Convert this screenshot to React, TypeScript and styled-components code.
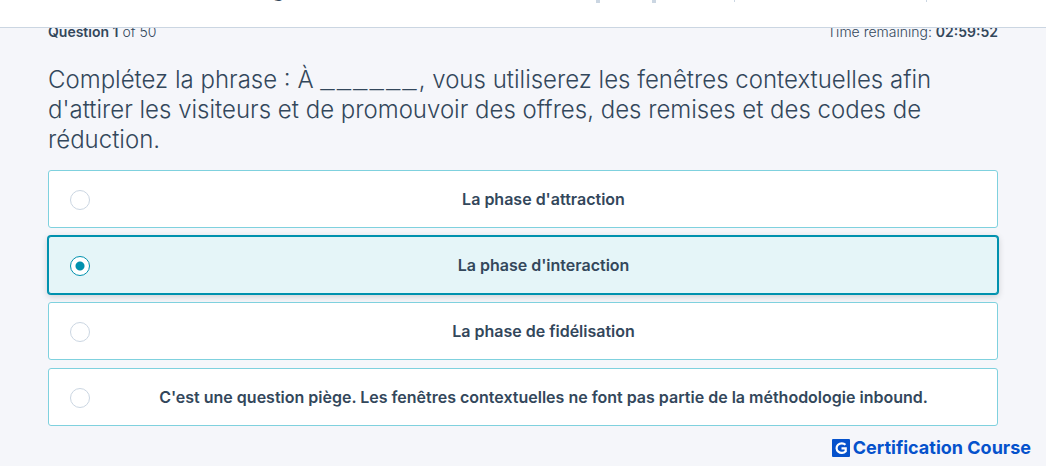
import { useState } from "react";
import styled, { createGlobalStyle } from "styled-components";

const Global = createGlobalStyle`
  * { box-sizing: border-box; }
  body {
    margin: 0;
    background: #f5f6fa;
    color: #33475b;
    font-family: Inter, "Open Sans", sans-serif;
  }
`;

const Header = styled.header`
  position: sticky;
  top: 0;
  z-index: 1;
  display: flex;
  height: 28px;
  padding-left: 26%;
  background: #fff;
  border-bottom: 1px solid #cbd6e2;
`;

const TitleEnd = styled.span`
  display: flex;
  align-items: flex-end;
  width: 12px;
  height: 2px;
  overflow: hidden;
  font-size: 20px;
  line-height: 24px;
  font-weight: 600;
`;

const Stems = styled.div`
  display: flex;
  flex: 1;
  padding-left: 312px;
`;

const Stem = styled.i<{ $w: number; $h: number; $gap: number }>`
  width: ${(p) => p.$w}px;
  height: ${(p) => p.$h}px;
  margin-right: ${(p) => p.$gap}px;
  background: #cbd6e2;
`;

const Main = styled.main`
  margin-top: -6px;
  padding: 0 48px;
`;

const Meta = styled.div`
  display: flex;
  justify-content: space-between;
  font-size: 14px;
  line-height: 20px;
  font-weight: 300;

  b { font-weight: 600; }
`;

const Question = styled.h1`
  margin: 23px 0 15px;
  font-size: 24px;
  line-height: 30px;
  font-weight: 300;
`;

const Blank = styled.span`
  font-family: "Liberation Mono", monospace;
  line-height: 24px;

  span { padding-right: 2px; }
`;

const Options = styled.fieldset`
  display: grid;
  gap: 8px;
  margin: 0;
  padding: 0;
  border: 0;
`;

const Option = styled.label<{ $on: boolean }>`
  display: flex;
  align-items: center;
  min-height: 58px;
  padding-left: 21px;
  border: 1px solid ${(p) => (p.$on ? "#0091ae" : "#7fd1de")};
  border-radius: 3px;
  background: ${(p) => (p.$on ? "#e5f5f8" : "#fff")};
  box-shadow: ${(p) => (p.$on ? "0 0 0 1px #0091ae, 0 2px 6px 1px rgba(0, 0, 0, 0.15)" : "none")};
  cursor: pointer;
`;

const Radio = styled.input`
  appearance: none;
  flex: none;
  width: 20px;
  height: 20px;
  margin: 2px 0 0;
  border: 1px solid #cbd6e2;
  border-radius: 50%;
  background: #fff;

  &:checked {
    border-color: #0091ae;
    background: radial-gradient(circle, #0091ae 4px, #fff 5px);
  }
`;

const Answer = styled.span`
  flex: 1;
  text-align: center;
  font-size: 16px;
  line-height: 24px;
  font-weight: 600;
`;

const Footer = styled.footer`
  display: flex;
  justify-content: flex-end;
  align-items: center;
  gap: 3px;
  padding: 10px 15px 6px;
  color: #0552cc;
  font-size: 18px;
  line-height: 24px;
  font-weight: 700;
`;

const answers = [
  "La phase d'attraction",
  "La phase d'interaction",
  "La phase de fidélisation",
  "C'est une question piège. Les fenêtres contextuelles ne font pas partie de la méthodologie inbound.",
];

export default function App() {
  const [selected, setSelected] = useState(1);
  return (
    <>
      <Global />
      <Header>
        <TitleEnd>g</TitleEnd>
        <Stems>
          <Stem $w={4} $h={3} $gap={52} />
          <Stem $w={4} $h={3} $gap={78} />
          <Stem $w={1} $h={2} $gap={191} />
          <Stem $w={1} $h={2} $gap={0} />
        </Stems>
      </Header>
      <Main>
        <Meta>
          <span><b>Question 1</b> of 50</span>
          <span>Time remaining: <b>02:59:52</b></span>
        </Meta>
        <Question id="question">
          Complétez la phrase : À{" "}
          <Blank>{Array.from("______", (c, i) => <span key={i}>{c}</span>)}</Blank>, vous
          utiliserez les fenêtres contextuelles afin d'attirer les visiteurs et de promouvoir
          des offres, des remises et des codes de réduction.
        </Question>
        <Options aria-labelledby="question">
          {answers.map((text, i) => (
            <Option key={text} $on={i === selected}>
              <Radio type="radio" name="answer" checked={i === selected} onChange={() => setSelected(i)} />
              <Answer>{text}</Answer>
            </Option>
          ))}
        </Options>
      </Main>
      <Footer>
        <svg width="18" height="18" viewBox="0 0 18 18" aria-hidden="true">
          <rect width="18" height="18" rx="1" fill="#0552cc" />
          <path d="M13.500 5.800A5.200 4.800 0 1 0 13.700 12.300V9.300H9.500" fill="none" stroke="#fff" strokeWidth="2.2" />
        </svg>
        Certification Course
      </Footer>
    </>
  );
}
